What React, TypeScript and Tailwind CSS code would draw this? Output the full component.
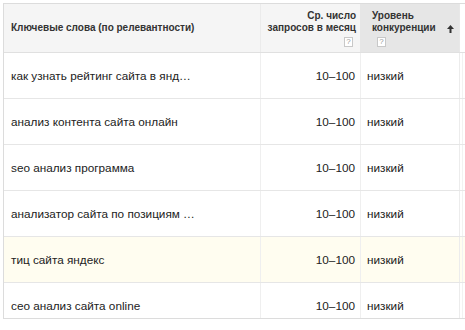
const rows = [
  { kw: "как узнать рейтинг сайта в янд…", vol: "10–100", comp: "низкий" },
  { kw: "анализ контента сайта онлайн", vol: "10–100", comp: "низкий" },
  { kw: "seo анализ программа", vol: "10–100", comp: "низкий" },
  { kw: "анализатор сайта по позициям …", vol: "10–100", comp: "низкий" },
  { kw: "тиц сайта яндекс", vol: "10–100", comp: "низкий", hl: true },
  { kw: "сео анализ сайта online", vol: "10–100", comp: "низкий" },
];

function Help() {
  return (
    <span className="inline-flex h-[10px] w-[9px] items-center justify-center border border-[#c8c8c8] bg-white text-[8px] leading-none font-normal text-[#999]">
      ?
    </span>
  );
}

export default function App() {
  return (
    <div
      className="h-[330px] w-[465px] bg-white pl-[3px] pt-[3px]"
      style={{ fontFamily: '"Liberation Sans", Arial, sans-serif' }}
    >
      <div className="h-[316px] overflow-hidden border-l border-t border-b border-[#dcdcdc]">
        <div className="grid h-[49px] grid-cols-[256px_100px_99px_1fr] border-b border-[#e0e0e0] text-[10px] font-bold leading-[12px] text-[#333]">
          <div className="flex items-center bg-[#f5f5f5] pl-[7px]">Ключевые слова (по релевантности)</div>
          <div className="flex flex-col items-end justify-center border-l border-[#ebebeb] bg-[#f5f5f5] pr-[4px] pt-[1px] text-right">
            <span>Ср. число</span>
            <span>запросов в месяц</span>
            <span className="mt-[3px] mr-[3px] flex"><Help /></span>
          </div>
          <div className="relative flex flex-col justify-center bg-[#e6e6e6] pl-[12px] pt-[1px]">
            <span>Уровень</span>
            <span>конкуренции</span>
            <span className="mt-[3px] ml-[5px] flex"><Help /></span>
            <svg className="absolute left-[87px] top-[21px]" width="7" height="8" viewBox="0 0 7 8">
              <path d="M3.5 0 L7 4 H4.5 V8 H2.5 V4 H0 Z" fill="#333" />
            </svg>
          </div>
          <div className="border-l border-[#e8e8e8] bg-white" />
        </div>
        {rows.map((r, i) => (
          <div
            key={i}
            className={`grid h-[46px] grid-cols-[256px_100px_99px_1fr] border-b border-[#e6e6e6] text-[11.75px] text-[#222] ${r.hl ? "bg-[#fffdf0]" : "bg-white"}`}
          >
            <div className="flex items-center pl-[7px]">{r.kw}</div>
            <div className="flex items-center justify-end border-l border-[#efefef] pr-[5px]">{r.vol}</div>
            <div className="flex items-center border-l border-[#efefef] pl-[6px]">{r.comp}</div>
            <div className="flex border-l border-[#ececec] pl-[2px]">
              <div className="border-l border-[#f2f2f2]" />
            </div>
          </div>
        ))}
      </div>
    </div>
  );
}
